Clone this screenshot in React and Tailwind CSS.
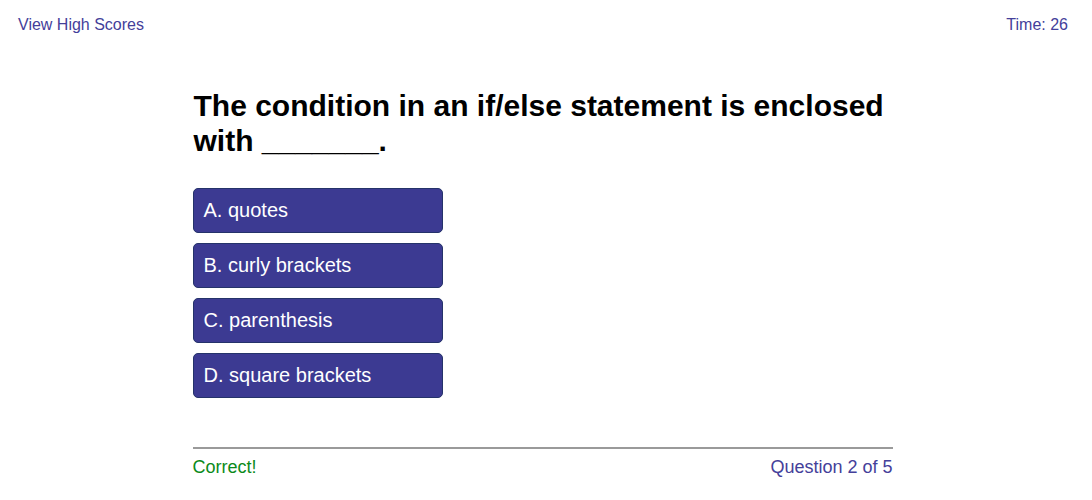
export default function App() {
  const answers = ["A. quotes", "B. curly brackets", "C. parenthesis", "D. square brackets"];
  return (
    <div className="w-[1092px] h-[500px] bg-white font-['Liberation_Sans',Arial,sans-serif] text-black">
      <header className="flex justify-between items-center pl-[18px] pr-[24px] pt-[15px] h-[35px] text-[16px] text-[#44409a]">
        <a href="#" className="leading-[20px]">View High Scores</a>
        <span className="leading-[20px]">Time: 26</span>
      </header>
      <main className="flex justify-center pr-[7px]">
        <div className="w-[700px]">
          <h1 className="mt-[53px] text-[30px] leading-[35px] font-bold pl-[1px]">
            The condition in an if/else statement is enclosed with _______.
          </h1>
          <div className="mt-[30px] flex flex-col gap-[10px]">
            {answers.map((a) => (
              <button
                key={a}
                className="w-[250px] h-[45px] text-left pl-[10px] pb-[2px] text-[20px] text-white bg-[#3c3a92] border border-[#25336a] rounded-[5px]"
              >
                {a}
              </button>
            ))}
          </div>
          <div className="mt-[49px] border-t-2 border-[#9a9a9a] pt-[7px] flex justify-between text-[18px] leading-[22px]">
            <span className="text-[#0b8a1a]">Correct!</span>
            <span className="text-[#44409a]">Question 2 of 5</span>
          </div>
        </div>
      </main>
    </div>
  );
}
